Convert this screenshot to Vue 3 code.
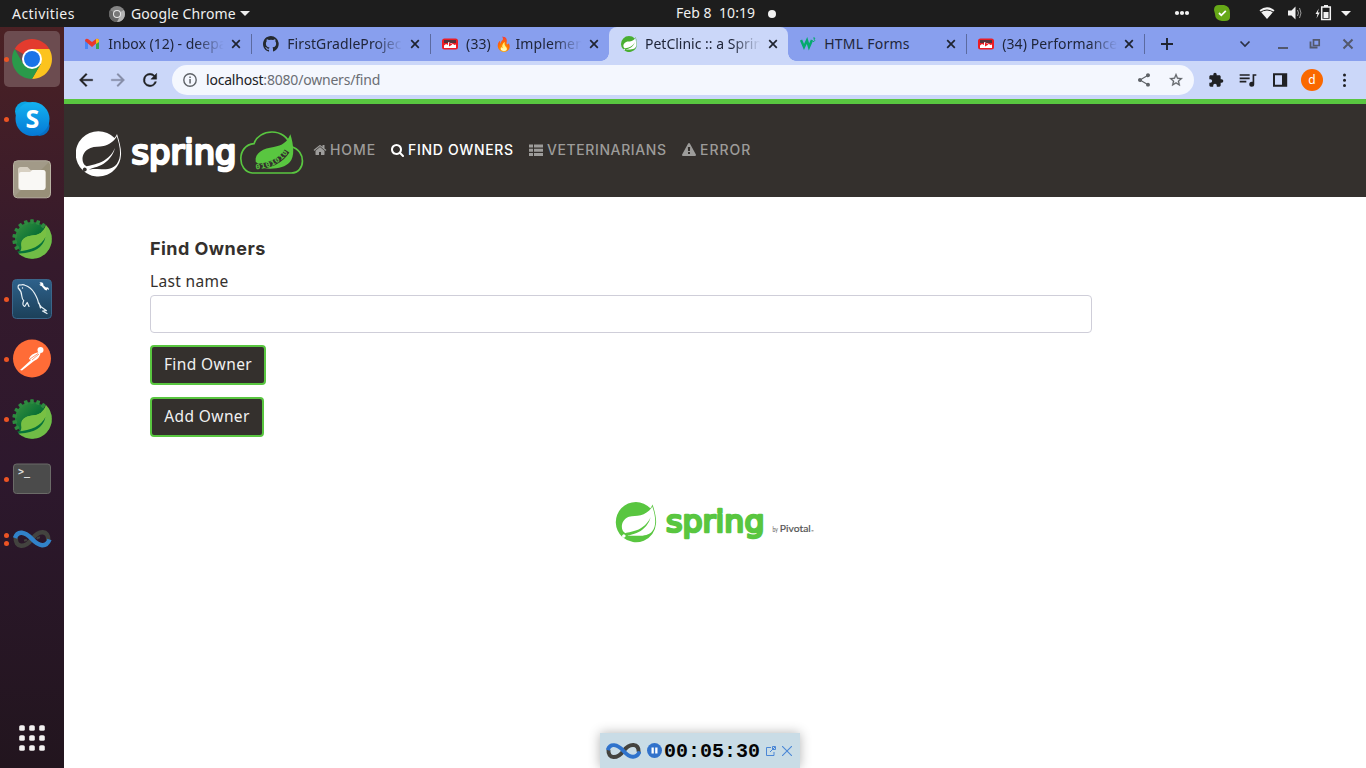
<script setup>
const tabs = [
  { id: 'gmail', title: 'Inbox (12) - deep', fade: 'a' },
  { id: 'github', title: 'FirstGradleProj', fade: 'ec' },
  { id: 'video', title: '(33) 🔥 Impleme', fade: 'n' },
  { id: 'spring', title: 'PetClinic :: a Spr', fade: 'in', active: true },
  { id: 'w3', title: 'HTML Forms', fade: '' },
  { id: 'video', title: '(34) Performan', fade: 'ce' },
]

const dock = [
  { id: 'chrome', dots: 1, focused: true },
  { id: 'skype', dots: 1 },
  { id: 'files', dots: 0 },
  { id: 'boot', dots: 0 },
  { id: 'mysql', dots: 1 },
  { id: 'postman', dots: 1 },
  { id: 'boot', dots: 1 },
  { id: 'terminal', dots: 1 },
  { id: 'loop', dots: 2 },
]

const teeth = Array.from({ length: 18 }, (_, i) => i * 20)
const springPath =
  'M21.8537 1.4158a10.4504 10.4504 0 0 1-1.284 2.2471A11.9666 11.9666 0 1 0 3.8518 20.7757l.4445.3951a11.9543 11.9543 0 0 0 19.6316-8.2971c.3457-3.0126-.568-6.8649-2.0742-11.458zM5.5805 20.8745a1.0174 1.0174 0 1 1-.1482-1.4323 1.0396 1.0396 0 0 1 .1482 1.4323zm16.1991-3.5806c-2.9385 3.9263-9.2601 2.5928-13.2852 2.7904 0 0-.7161.0494-1.4323.1481 0 0 .2717-.1234.6174-.2469 2.8398-.9877 4.1732-1.1853 5.9018-2.0743 3.2349-1.6545 6.4698-5.2844 7.1118-9.0379-1.2347 3.6053-4.9881 6.7164-8.3959 7.9761-2.3459.8643-6.5685 1.7039-6.5685 1.7039l-.1729-.0988c-2.8645-1.4076-2.9632-7.6304 2.2718-9.6306 2.2966-.889 4.4696-.395 6.9637-.9877 2.6422-.6174 5.7043-2.5929 6.939-5.1857 1.3828 4.1732 3.062 10.6429.0493 14.6434z'
</script>

<template>
  <div class="desktop">
    <header class="topbar">
      <div class="top-left">
        <span class="activities">Activities</span>
        <svg class="app-icon" viewBox="0 0 16 16">
          <circle cx="8" cy="8" r="8" fill="#858585" />
          <path d="M8 8 14.9 4A8 8 0 0 1 8 16Z" fill="#b4b4b4" />
          <path d="M1.1 4A8 8 0 0 0 8 16l3-6Z" fill="#666" />
          <circle cx="8" cy="8" r="4" fill="#e8e8e8" />
          <circle cx="8" cy="8" r="3" fill="#777" />
        </svg>
        <span class="app-name">Google Chrome</span>
        <svg class="caret" viewBox="0 0 10 5"><path d="M0 0h10L5 5z" fill="#eee" /></svg>
      </div>
      <div class="clock"><span>Feb 8&nbsp; 10:19</span><i class="note"></i></div>
      <svg class="tray" viewBox="1166 0 200 27" width="200" height="27">
        <g fill="#f2f2f2">
          <circle cx="1177" cy="13" r="2.1" /><circle cx="1182" cy="13" r="2.1" /><circle cx="1187" cy="13" r="2.1" />
          <path d="M1259.5 10.2Q1267 4.200 1274.500 10.200L1267 19Z" />
          <path d="M1288 10.500h3.500l4-4v13l-4-4h-3.500z" />
          <path d="M1318.800 8.500l-3.300 5.500h2l-1 4.500 3.300-6h-2z" />
          <rect x="1323.500" y="12" width="5" height="6" />
          <path d="M1341 11h10l-5 5z" />
        </g>
        <path d="M1260 10.500q7-5 14 0" fill="none" stroke="#1d1d1d" stroke-width="1" transform="translate(0 2)" />
        <path d="M1297.500 10q2 3 0 6M1299.500 8q3 5 0 10" fill="none" stroke="#999" stroke-width="1" />
        <path d="M1321.700 7h8.600v12.500h-8.600zM1324 5.800h4" fill="none" stroke="#f2f2f2" stroke-width="1.500" />
        <path d="M1214 10q0-5 5-5h5q6 1 6 8v4q0 4-5 4h-3q-7-1-7-7z" fill="#66a817" />
        <path d="M1219 13l2.300 2.300 4.500-4.500" fill="none" stroke="#fff" stroke-width="1.800" />
      </svg>
    </header>

    <div class="workspace">
      <aside class="dock">
        <div v-for="(app, i) in dock" :key="i" class="slot">
          <div class="dots"><i v-for="d in app.dots" :key="d"></i></div>
          <div class="tile" :class="{ focused: app.focused }">
            <svg v-if="app.id === 'chrome'" viewBox="0 0 40 40">
              <path d="M20 20 2.700 10A20 20 0 0 1 37.300 10z" fill="#e33b2e" />
              <path d="M20 10h17.300A20 20 0 0 1 20 40l8.700-15z" fill="#fcc31e" />
              <path d="M2.700 10A20 20 0 0 0 20 40l8.700-15H11.300z" fill="#2a9a4a" />
              <circle cx="20" cy="20" r="10" fill="#fff" />
              <circle cx="20" cy="20" r="8" fill="#1a73e8" />
            </svg>
            <svg v-else-if="app.id === 'skype'" viewBox="0 0 40 40">
              <defs><linearGradient id="sky" x2="0" y2="1"><stop stop-color="#13b2f0" /><stop offset="1" stop-color="#0578d5" /></linearGradient></defs>
              <circle cx="13" cy="12.500" r="10" fill="#0aa3e3" />
              <circle cx="27.500" cy="27" r="10" fill="#0670c5" />
              <circle cx="20.500" cy="20" r="17" fill="url(#sky)" />
              <text x="20.400" y="29" text-anchor="middle" class="skype-s">S</text>
            </svg>
            <svg v-else-if="app.id === 'files'" viewBox="0 0 40 40">
              <rect x="1.500" y="1.800" width="37" height="37" rx="4" fill="#989079" stroke="#b9b3a3" />
              <path d="M2 2h36L2 38z" fill="#a9a292" opacity=".6" />
              <path d="M6 10.500q0-2.500 2.500-2.500h7l3 3H31q2.500 0 2.500 2.500V28q0 3-3 3H9q-3 0-3-3z" fill="#d7d0c2" />
              <path d="M7 15q0-2 2-2h9l2.500-2H31q2.500 0 2.500 2.500V28q0 3-3 3H9.500Q7 31 7 28z" fill="#f9f8f5" />
            </svg>
            <svg v-else-if="app.id === 'boot'" viewBox="0 0 40 40">
              <defs><linearGradient id="gear" x2="1" y2="1"><stop stop-color="#3b9440" /><stop offset=".5" stop-color="#0b7035" /></linearGradient></defs>
              <circle cx="20" cy="20" r="17" fill="url(#gear)" />
              <rect v-for="a in teeth" :key="a" x="18.200" y="0.300" width="3.600" height="4.500" rx=".8" fill="#2d8a3f" :transform="`rotate(${a} 20 20)`" />
              <path d="M34 6A19.800 19.800 0 0 1 7.300 35.200Q9.800 31 9.300 27 8 18 20 16.500 31 16 34 6z" fill="#70bd46" />
              <path d="M34 7Q31 16 20 16.500 8 18 9.500 27 10 31 12 31 29 31 34 17" fill="#78c043" />
              <path d="M5 32.500Q27 31 33.500 18 30 33.500 8 34.500z" fill="#07723a" />
            </svg>
            <svg v-else-if="app.id === 'mysql'" viewBox="0 0 40 40">
              <defs><linearGradient id="sea" x2="0" y2="1"><stop stop-color="#2e618b" /><stop offset="1" stop-color="#1c4059" /></linearGradient></defs>
              <rect x=".5" y=".5" width="39" height="39" rx="4" fill="url(#sea)" stroke="#3b668a" />
              <g fill="none" stroke="#e8f1f6" stroke-width="1.200" stroke-linecap="round" stroke-linejoin="round">
                <path d="M6.200 9Q5.500 5 9 6q2-1 4 .2 6 2 9.500 8 3.500 6 4 10l2.500 3.500 5.500 4-4 .3 4.500 2.500M6.200 9q3.500 3.500 3.500 7.500.5 4 2 5-2 5 1 6l2.500-4 1.800 4M27 24l1.500 5" />
              </g>
              <circle cx="10.500" cy="9" r=".7" fill="#fff" />
              <path d="M27.500 3.500q4-1 4 3l2.500 2q3-1 3 2.500l-2-1v1.500l-2-.5-3.500-4q-2 0-2-2l1.500.5z" fill="#fff" />
            </svg>
            <svg v-else-if="app.id === 'postman'" viewBox="0 0 40 40">
              <circle cx="20" cy="19.500" r="19" fill="#ff6c37" />
              <circle cx="28.500" cy="11" r="3" fill="#fff" />
              <path d="M27 13q-9 2-10 7l2 1-11 10 2 .5L22 22q6-3 6.500-8z" fill="#fff" />
              <path d="M18 20l8-5.500M20 21l7-6" stroke="#ff6c37" stroke-width=".7" />
            </svg>
            <svg v-else-if="app.id === 'terminal'" viewBox="0 0 40 40">
              <rect x="1.500" y="5" width="37" height="29.500" rx="3" fill="#4b4b4b" stroke="#6b6b68" />
              <text x="6" y="15.800" class="prompt">&gt;_</text>
            </svg>
            <svg v-else viewBox="0 0 40 40">
              <g fill="none" stroke-width="4.500">
                <path d="M3.800 18.500C3 29 13 29.500 20 20S36.500 11 36.300 21" stroke="#43433f" />
                <path d="M12 21.500q2 0 3-1M25 20q1-2 3-1.500" stroke="#43433f" stroke-width="2" />
                <path d="M3 19C5.500 11 13 12.500 20 20S34 29 37.500 20.500" stroke="#3182c9" />
              </g>
            </svg>
          </div>
        </div>
        <svg class="apps-grid" viewBox="0 0 26 26" width="26" height="26">
          <g fill="#f3f1f1">
            <template v-for="r in 3" :key="r"><rect v-for="c in 3" :key="c" :x="c * 10 - 9.800" :y="r * 10 - 9.800" width="5.600" height="5.600" rx="1.600" /></template>
          </g>
        </svg>
      </aside>

      <main class="browser">
        <div class="tabstrip">
          <div v-for="(tab, i) in tabs" :key="i" class="tab" :class="{ active: tab.active, plain: i === 2 || tab.active, late: i > 3 }">
            <svg v-if="tab.id === 'gmail'" viewBox="0 0 16 16">
              <path d="M1 4v9h3V7z" fill="#4986f5" /><path d="M12 7v6h3V4z" fill="#35a953" />
              <path d="M1 5q0-3 3-2l4 3 4-3q3-1 3 2L8 11z" fill="#e9392c" /><path d="M12 3q3-1 3 2v1l-3 2z" fill="#f9bb16" />
            </svg>
            <svg v-else-if="tab.id === 'github'" viewBox="0 0 16 16">
              <path fill="#24292f" d="M8 0C3.580 0 0 3.580 0 8c0 3.540 2.290 6.530 5.470 7.590.4.070.55-.17.55-.38v-1.490c-2.230.48-2.690-1.070-2.690-1.070-.36-.92-.89-1.170-.89-1.170-.73-.5.05-.49.05-.49.8.06 1.230.83 1.230.83.72 1.220 1.870.87 2.330.66.07-.52.28-.87.5-1.070-1.770-.2-3.640-.89-3.640-3.950 0-.87.31-1.590.82-2.150-.08-.2-.36-1.020.08-2.120 0 0 .67-.21 2.200.82a7.500 7.500 0 0 1 4 0c1.530-1.040 2.200-.82 2.200-.82.44 1.100.16 1.920.08 2.120.51.56.82 1.270.82 2.150 0 3.070-1.870 3.750-3.650 3.950.29.25.54.73.54 1.480v2.200c0 .21.15.46.55.38A8 8 0 0 0 8 0z" />
            </svg>
            <svg v-else-if="tab.id === 'video'" viewBox="0 0 16 16">
              <rect y="2.500" width="16" height="11" rx="2.500" fill="#ec1c24" /><path d="M2 4h12v3H2z" fill="#55333a" />
              <path d="M2 12V9.500L4 8l2 1V6l5 2 1.500 1 1.500-.5V12z" fill="#fff" /><path d="M7 6.500l3.500 2L7 10.500z" fill="#ec1c24" />
            </svg>
            <svg v-else-if="tab.id === 'spring'" viewBox="0 0 24 24">
              <circle cx="12" cy="12" r="11" fill="#fff" /><path :d="springPath" fill="#49ae31" />
            </svg>
            <svg v-else viewBox="0 0 16 16" fill="none">
              <path d="M1 4l3 7 3-6.500 2 6.500 3-7" stroke="#04aa6d" stroke-width="2.500" /><path d="M13 2h2l-1 1.500q2 .5 0 2h-1" stroke="#04aa6d" stroke-width=".9" />
            </svg>
            <span class="tab-title" :class="tab.id">{{ tab.title }}<span class="fade">{{ tab.fade }}</span></span>
            <svg class="close" viewBox="0 0 10 10"><path d="M1.200 1.200l7.600 7.600M8.800 1.200L1.200 8.800" stroke="#1f2430" stroke-width="1.700" /></svg>
          </div>
          <svg class="plus" viewBox="0 0 12 12"><path d="M6 0v12M0 6h12" stroke="#1f2430" stroke-width="1.900" /></svg>
          <svg class="window-controls" viewBox="1236 34 120 20" width="120" height="20" fill="none">
            <path d="M1240.500 41.500l4.500 4.500 4.500-4.500" stroke="#2b3145" stroke-width="1.700" />
            <path d="M1278 48h10M1310.500 41.500v6h7" stroke="#53586c" stroke-width="1.800" />
            <path d="M1313.500 39.800h5.700v5.700h-5.700z" stroke="#53586c" stroke-width="1.700" />
            <path d="M1343.500 39.500l9 9M1352.500 39.500l-9 9" stroke="#53586c" stroke-width="2" />
          </svg>
        </div>

        <div class="toolbar">
          <span class="tool"><svg viewBox="0 0 24 24"><path d="M20 11H7.830l5.590-5.590L12 4l-8 8 8 8 1.410-1.410L7.830 13H20z" stroke="#202124" stroke-width=".4" /></svg></span>
          <span class="tool dim"><svg viewBox="0 0 24 24"><path d="M4 11h12.170l-5.590-5.590L12 4l8 8-8 8-1.410-1.410L16.170 13H4z" stroke="#858da7" stroke-width=".4" /></svg></span>
          <span class="tool"><svg viewBox="0 0 24 24"><path d="M17.650 6.350A7.960 7.960 0 0 0 12 4a8 8 0 1 0 7.730 10h-2.080A6 6 0 1 1 12 6c1.660 0 3.140.69 4.220 1.780L13 11h7V4z" stroke="#202124" stroke-width=".5" /></svg></span>
          <div class="omnibox">
            <svg class="info" viewBox="0 0 14 14"><circle cx="7" cy="7" r="6.200" fill="none" stroke="#5f6368" stroke-width="1.400" /><path d="M6.300 6h1.500v4.500H6.300zM6.300 3.500h1.500V5H6.300z" fill="#5f6368" /></svg>
            <span class="url"><b>localhost</b>:8080/owners/find</span>
            <span class="tool soft"><svg class="share" viewBox="0 0 24 24"><path d="M18 16.080c-.76 0-1.440.3-1.960.77L8.910 12.700c.05-.23.09-.46.09-.7s-.04-.47-.09-.7l7.050-4.110c.54.5 1.250.81 2.040.81 1.660 0 3-1.340 3-3s-1.340-3-3-3-3 1.340-3 3c0 .24.04.47.09.7L8.040 9.810C7.500 9.310 6.790 9 6 9c-1.660 0-3 1.340-3 3s1.340 3 3 3c.79 0 1.500-.31 2.040-.81l7.120 4.160c-.05.21-.08.43-.08.65 0 1.610 1.310 2.920 2.920 2.920s2.920-1.310 2.920-2.920-1.310-2.920-2.920-2.920z" /></svg></span>
            <span class="tool soft"><svg class="share" viewBox="0 0 24 24"><path d="M22 9.240l-7.190-.62L12 2 9.190 8.630 2 9.240l5.460 4.730L5.820 21 12 17.270 18.180 21l-1.630-7.030zM12 15.400l-3.760 2.270 1-4.280-3.320-2.880 4.380-.38L12 6.100l1.710 4.040 4.380.38-3.320 2.880 1 4.280z" stroke="#5f6368" stroke-width=".4" /></svg></span>
          </div>
          <span class="tool first"><svg class="puzzle" viewBox="0 0 24 24"><path d="M20.500 11H19V7c0-1.100-.9-2-2-2h-4V3.500a2.500 2.500 0 0 0-5 0V5H4c-1.100 0-2 .9-2 2v3.800h1.500a2.700 2.700 0 0 1 0 5.400H2V20c0 1.100.9 2 2 2h3.800v-1.500a2.700 2.700 0 0 1 5.400 0V22H17c1.100 0 2-.9 2-2v-4h1.500a2.500 2.500 0 0 0 0-5z" /></svg></span>
          <span class="tool"><svg viewBox="0 0 24 24"><path d="M14 5H2v2h12zm0 4H2v2h12zM2 13v2h8v-2zM17.500 5v9.200c-.3-.1-.6-.2-1-.2a3 3 0 1 0 3 3V7H22V5z" /></svg></span>
          <span class="tool"><svg viewBox="0 0 20 20"><path d="M4 4.200h12.200v11.600H4z" fill="none" stroke="#202124" stroke-width="2" /><path d="M12 4h4.500v12H12z" /></svg></span>
          <span class="tool"><span class="avatar">d</span></span>
          <span class="tool"><svg viewBox="0 0 20 20"><circle cx="10.500" cy="5" r="1.500" /><circle cx="10.500" cy="10.300" r="1.500" /><circle cx="10.500" cy="15.500" r="1.500" /></svg></span>
        </div>

        <div class="page">
          <nav class="navbar">
            <svg class="brand" viewBox="76 128 230 52" width="230" height="52">
              <g transform="translate(75.700 131.200) scale(1.890)"><path :d="springPath" fill="#fff" /></g>
              <text x="131.500" y="163.500" textLength="105" lengthAdjust="spacingAndGlyphs" class="word light">spring</text>
              <g transform="translate(239.700 131) scale(.3333)">
                <path d="M38 126C-8 122-10 42 43 38 56-6 137-14 154 47 201 58 198 126 155 126Z" fill="none" stroke="#59c640" stroke-width="5" />
                <path d="M152 10C162 42 166 78 150 94 135 110 108 116 70 112L48 92C44 65 72 52 102 48 128 44 142 34 152 10z" fill="#59c640" />
                <path d="M46 108Q115 103 142 60" fill="none" stroke="#34302d" stroke-width="17" />
                <path id="bits" d="M48 115Q116 111 150 58" fill="none" />
                <text class="bits"><textPath href="#bits">0101010</textPath></text>
              </g>
            </svg>
            <a class="link home"><svg viewBox="0 0 1792 1792"><path d="M1472 992v480q0 26-19 45t-45 19h-384v-384h-256v384h-384q-26 0-45-19t-19-45v-480q0-1 .5-3t.5-3l575-474 575 474q1 2 1 6zm223-69l-62 74q-8 9-21 11h-3q-13 0-21-7l-692-577-692 577q-12 8-24 7-13-2-21-11l-62-74q-8-10-7-23.500t11-21.500l719-599q32-26 76-26t76 26l244 204v-195q0-14 9-23t23-9h192q14 0 23 9t9 23v408l219 182q10 8 11 21.500t-7 23.500z" /></svg><span>HOME</span></a>
            <a class="link find"><svg viewBox="0 0 1792 1792"><path d="M1152 832q0-185-131.500-316.500t-316.500-131.500-316.500 131.500-131.500 316.500 131.500 316.500 316.500 131.500 316.500-131.500 131.500-316.500zm512 832q0 52-38 90t-90 38q-54 0-90-38l-343-342q-179 124-399 124-143 0-273.500-55.500t-225-150-150-225-55.500-273.500 55.500-273.500 150-225 225-150 273.500-55.500 273.500 55.500 225 150 150 225 55.500 273.500q0 220-124 399l343 343q37 37 37 90z" /></svg><span>FIND OWNERS</span></a>
            <a class="link vets"><svg viewBox="0 0 14 14"><path d="M0 1.500h4v3H0zM5 1.500h9v3H5zM0 5.700h4v3H0zM5 5.700h9v3H5zM0 9.900h4v3H0zM5 9.900h9v3H5z" /></svg><span>VETERINARIANS</span></a>
            <a class="link error"><svg viewBox="0 0 1792 1792"><path d="M1024 1375v-190q0-14-9.500-23.500t-22.500-9.500h-192q-13 0-22.500 9.500t-9.500 23.500v190q0 14 9.500 23.500t22.500 9.500h192q13 0 22.500-9.500t9.500-23.500zm-2-374l18-459q0-12-10-19-13-11-24-11h-220q-11 0-24 11-10 7-10 21l17 457q0 10 10 16.500t24 6.500h185q14 0 23.500-6.500t10.500-16.500zm-14-934l768 1408q35 63-2 126-17 29-46.500 46t-63.500 17h-1536q-34 0-63.500-17t-46.500-46q-37-63-2-126l768-1408q17-31 47-49t65-18 65 18 47 49z" /></svg><span>ERROR</span></a>
          </nav>
          <section class="content">
            <h2>Find Owners</h2>
            <label for="lastName">Last name</label>
            <input id="lastName" type="text" />
            <button class="find-btn">Find Owner</button>
            <button class="add-btn">Add Owner</button>
          </section>
          <svg class="footer-logo" viewBox="614 498 204 48" width="204" height="48">
            <g transform="translate(615.800 502) scale(1.680)"><path :d="springPath" fill="#59c640" /></g>
            <text x="666" y="531.500" textLength="98.500" lengthAdjust="spacingAndGlyphs" class="word green">spring</text>
            <text x="772.500" y="531.500" textLength="5.500" lengthAdjust="spacingAndGlyphs" class="by">by</text>
            <text x="779.800" y="531.500" textLength="31" lengthAdjust="spacingAndGlyphs" class="pivotal">Pivotal</text>
            <path d="M811.500 530.800h2" stroke="#777" stroke-width="1" />
          </svg>
        </div>
      </main>
    </div>

    <div class="recorder">
      <svg viewBox="0 0 40 20" class="rec-loop" fill="none" stroke-width="4.500">
        <path d="M2.800 8.500C2 19.500 13 19.500 20 10S37.500 1 37.300 11" stroke="#43433f" />
        <path d="M2 9C4.500 .5 13 2 20 10S35 19.500 38.500 10.500" stroke="#2f73cc" />
      </svg>
      <svg viewBox="0 0 15 15" class="pause"><circle cx="7.500" cy="7.500" r="7.500" fill="#3172cb" /><path d="M4.500 4.500h2.300v6H4.500zM8.200 4.500h2.300v6H8.200z" fill="#fff" /></svg>
      <span class="time">00:05:30</span>
      <svg viewBox="0 0 10 10" class="pop" fill="none" stroke="#4b87d6"><path d="M5 1.500H.5v8h7.500V6M4 6l5-5M6.500.5h3v3H6.500z" /></svg>
      <svg viewBox="0 0 10 10" class="dismiss" fill="none" stroke="#4b87d6" stroke-width="1.100"><path d="M0 0l10 10M10 0L0 10" /></svg>
    </div>
  </div>
</template>

<style>
body { margin: 0; overflow: hidden; }
</style>

<style scoped>
* { box-sizing: border-box; }
svg { display: block; flex: none; }
.desktop { position: relative; width: 1366px; height: 768px; overflow: hidden; display: flex; flex-direction: column; background: #fff; font-family: "Noto Sans", sans-serif; }
.topbar { height: 27px; flex: none; background: #1d1d1d; color: #f0f0f0; display: grid; grid-template-columns: 583px 1fr 200px; font-size: 14px; line-height: 27px; white-space: nowrap; }
.top-left { display: flex; align-items: center; padding-left: 12px; }
.activities { width: 97px; letter-spacing: .45px; }
.app-icon { width: 16px; height: 16px; margin-right: 6px; }
.app-name { letter-spacing: .1px; width: 104px; }
.caret { width: 10px; height: 5px; margin-left: 5px; }
.clock { display: flex; align-items: center; justify-content: flex-start; padding-left: 93px; }
.clock span { width: 79px; line-height: 25px; height: 27px; letter-spacing: .05px; }
.note { width: 8px; height: 8px; border-radius: 50%; background: #f2f2f2; margin-left: 13px; }
.workspace { flex: 1; display: grid; grid-template-columns: 64px 1fr; min-height: 0; }
.dock { display: flex; flex-direction: column; align-items: center; padding-top: 2px; background: linear-gradient(#4b2124 0, #351a2c 32%, #2d182d 60%, #22151e 100%); }
.slot { width: 64px; height: 60px; flex: none; display: grid; grid-template-columns: 4px 56px 4px; align-items: center; }
.dots { display: flex; flex-direction: column; gap: 3px; width: 5px; margin-left: 4px; z-index: 1; }
.dots i { width: 5px; height: 5px; border-radius: 50%; background: #ec5424; }
.tile { width: 56px; height: 56px; border-radius: 5px; display: grid; place-items: center; }
.tile.focused { background: #6c4c50; }
.tile svg { width: 40px; height: 40px; }
.skype-s { font: bold 25px "Open Sans", sans-serif; fill: #fff; }
.prompt { font: bold 10px "DejaVu Sans Mono", monospace; fill: #ddd; }
.apps-grid { margin-top: auto; margin-bottom: 17px; }
.browser { min-width: 0; display: flex; flex-direction: column; }
.tabstrip { height: 34px; flex: none; background: #889fee; display: flex; align-items: center; padding-left: 8px; }
.tab { position: relative; width: 178.900px; height: 34px; flex: none; display: flex; align-items: center; padding-left: 12.300px; color: #20263a; }
.tab > svg { width: 16px; height: 16px; }
.tab::after { content: ""; position: absolute; right: -1px; top: 7px; width: 1px; height: 20px; background: #5b6aa0; }
.tab.plain::after { display: none; }
.tab.active { background: #cbd7f9; border-radius: 8px 8px 0 0; width: 179.500px; }
.tab.late { width: 178px; padding-left: 12px; }
.tab.active::before { content: ""; position: absolute; left: -8px; right: -8px; bottom: 0; height: 8px; background: radial-gradient(circle at 0 0, transparent 7.500px, #cbd7f9 8px) left / 8px 8px no-repeat, radial-gradient(circle at 100% 0, transparent 7.500px, #cbd7f9 8px) right / 8px 8px no-repeat; }
.tab-title { width: 118px; margin-left: 8px; font-size: 14px; line-height: 20px; white-space: nowrap; -webkit-mask-image: linear-gradient(90deg, #000 74%, transparent 98%); mask-image: linear-gradient(90deg, #000 74%, transparent 98%); }
.tab-title.w3 { -webkit-mask-image: none; mask-image: none; letter-spacing: .25px; }
.tab-title.video, .tab-title.github { letter-spacing: .1px; }
.tab > .close { width: 10px; height: 10px; margin-left: 5px; }
.late > .close { margin-left: 4px; }
.plus { width: 12px; height: 12px; margin-left: 17px; }
.window-controls { margin-left: auto; margin-right: 10px; }
.toolbar { height: 38px; flex: none; background: #cbd7f9; display: flex; align-items: center; padding: 0 6px; }
.tool { width: 32px; flex: none; display: grid; place-items: center; fill: #202124; }
.tool svg { width: 20px; height: 20px; }
.tool .puzzle, .tool .share { width: 16px; height: 16px; }
.dim { fill: #858da7; }
.soft { fill: #5f6368; }
.omnibox { flex: 1; height: 30px; margin-left: 6px; border-radius: 15px; background: #f4f7fe; display: flex; align-items: center; padding: 0 2px 0 11px; }
.info { width: 14px; height: 14px; }
.url { flex: 1; margin-left: 9px; color: #6b6e74; font-size: 14px; letter-spacing: -.2px; line-height: 20px; }
.url b { font-weight: 400; color: #202124; }
.first { margin-left: 6px; }
.avatar { width: 22px; height: 22px; border-radius: 50%; background: #fa6800; color: #fff; font-size: 12px; line-height: 21px; text-align: center; }
.page { flex: 1; background: #fff; border-top: 5px solid #59c640; display: flex; flex-direction: column; }
.navbar { height: 93px; flex: none; background: #34302d; display: flex; align-items: center; padding-left: 12px; }
.brand { margin-top: 6px; }
.link { display: flex; align-items: center; margin-top: -2px; color: #9d9c9a; fill: currentColor; font: 500 14px/20px Inter, sans-serif; white-space: nowrap; }
.link svg { width: 14px; height: 14px; margin-right: 3px; }
.home { margin-left: 7px; width: 78px; letter-spacing: .9px; }
.find { color: #fff; width: 138px; letter-spacing: .68px; }
.find svg { margin-right: 3px; }
.vets { width: 153px; letter-spacing: .6px; }
.vets svg { margin-right: 4px; }
.error { letter-spacing: 1px; }
.error svg { margin-right: 4px; }
.word { font: 33px "DejaVu Sans", sans-serif; stroke-width: 2.600; stroke-linejoin: round; }
.light { fill: #fff; stroke: #fff; }
.green { fill: #59c640; stroke: #59c640; font-size: 31px; }
.bits { font: bold 24px "Liberation Mono", monospace; fill: #59c640; letter-spacing: 2px; }
.content { padding: 40px 0 0 86px; width: 1028px; display: flex; flex-direction: column; align-items: flex-start; color: #34302d; font-family: "Noto Sans", sans-serif; }
h2 { margin: 0; font: 700 18px/24px Inter, sans-serif; letter-spacing: .45px; }
label { margin-top: 8px; font-size: 15.500px; letter-spacing: .35px; line-height: 24px; height: 26px; }
input { width: 942px; height: 38px; border: 1px solid #cfced9; border-radius: 4px; outline: 0; background: #fff; }
button { height: 40px; margin: 12px 0 0; padding: 0 0 2px; border: 2px solid #59c640; border-radius: 4px; background: #34302d; color: #f1f1f1; font: 15.500px/33px "Noto Sans", sans-serif; letter-spacing: .4px; }
.find-btn { width: 116px; }
.add-btn { width: 114px; }
.footer-logo { margin: 61px 0 0 550px; }
.by { font: 7px Lato, sans-serif; fill: #555; }
.pivotal { font: 10px Lato, sans-serif; fill: #555; stroke: #555; stroke-width: .2; }
.recorder { position: absolute; left: 600px; top: 733px; width: 200px; height: 35px; background: #c9dce6; box-shadow: 0 0 12px rgba(0, 0, 0, .3); display: flex; align-items: center; padding-left: 6px; }
.rec-loop { width: 35px; height: 18px; }
.pause { width: 15px; height: 15px; margin-left: 6px; }
.time { width: 96px; margin: 2px 0 0 2px; font: bold 20px/24px "Liberation Mono", monospace; color: #050505; }
.pop { width: 10px; height: 10px; margin-left: 6px; }
.dismiss { width: 10px; height: 10px; margin-left: 6px; }
</style>
